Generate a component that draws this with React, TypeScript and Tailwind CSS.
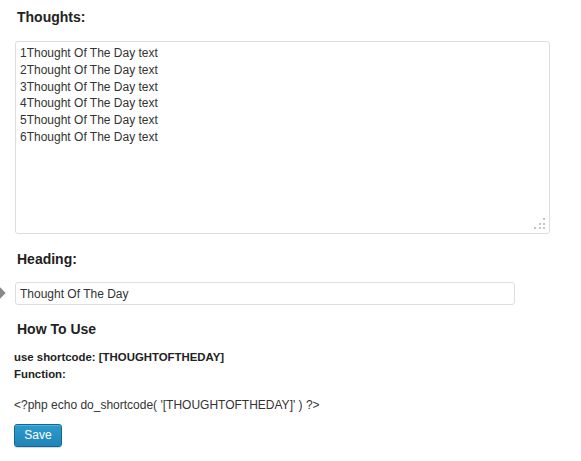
import React from "react";

const lines = [
  "1Thought Of The Day text",
  "2Thought Of The Day text",
  "3Thought Of The Day text",
  "4Thought Of The Day text",
  "5Thought Of The Day text",
  "6Thought Of The Day text",
];

export default function App() {
  return (
    <div
      className="relative w-[581px] h-[461px] overflow-hidden bg-white pl-[14px] text-[#333]"
      style={{ fontFamily: '"Liberation Sans", Arial, sans-serif' }}
    >
      <h3 className="mt-[7px] ml-[3px] text-[14px] leading-[20px] font-bold text-[#222]">Thoughts:</h3>

      <div className="relative mt-[14px] ml-[1px] w-[535px] h-[193px] border border-[#dddddd] rounded-[3px] px-[4px] pt-[3px] text-[12px] leading-[16.8px] text-[#333]">
        {lines.map((l) => (
          <div key={l}>{l}</div>
        ))}
        <div className="absolute right-[4px] bottom-[4px] grid grid-cols-3 gap-[2.5px]">
          <span className="w-[2px] h-[2px]" />
          <span className="w-[2px] h-[2px]" />
          <span className="w-[2px] h-[2px] bg-[#c4c4c4]" />
          <span className="w-[2px] h-[2px]" />
          <span className="w-[2px] h-[2px] bg-[#c4c4c4]" />
          <span className="w-[2px] h-[2px] bg-[#c4c4c4]" />
          <span className="w-[2px] h-[2px] bg-[#c4c4c4]" />
          <span className="w-[2px] h-[2px] bg-[#c4c4c4]" />
          <span className="w-[2px] h-[2px] bg-[#c4c4c4]" />
        </div>
      </div>

      <h3 className="mt-[15px] ml-[3px] text-[14px] leading-[20px] font-bold text-[#222]">Heading:</h3>

      <div className="relative mt-[13px] ml-[1px]">
        <div className="absolute left-[-19px] top-[7px] w-[8px] h-[8px] rotate-45 bg-[#888]" />
        <div className="w-[500px] h-[23px] border border-[#dddddd] rounded-[3px] px-[4px] flex items-center text-[12px] text-[#333]">
          Thought Of The Day
        </div>
      </div>

      <h3 className="mt-[14px] ml-[3px] text-[14px] leading-[20px] font-bold text-[#222]">How To Use</h3>

      <div className="mt-[10px] text-[11.4px] leading-[17px] font-bold text-[#222]">
        <div>use shortcode: [THOUGHTOFTHEDAY]</div>
        <div>Function:</div>
      </div>

      <div className="mt-[14px] text-[12px] leading-[17px] text-[#333]">
        &lt;?php echo do_shortcode( '[THOUGHTOFTHEDAY]' ) ?&gt;
      </div>

      <button className="mt-[10px] w-[48px] h-[23px] rounded-[3px] border border-[#0c6a97] bg-gradient-to-b from-[#2e9bcc] to-[#2184b8] text-white text-[12px] leading-[21px] shadow-[inset_0_1px_0_rgba(120,200,230,0.5),0_1px_0_rgba(0,0,0,0.15)]">
        Save
      </button>
    </div>
  );
}
